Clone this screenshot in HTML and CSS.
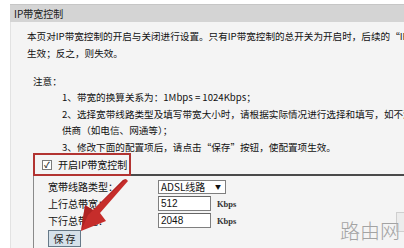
FILE: index.html
```html
<!DOCTYPE html>
<html lang="zh-CN">
<head>
    <meta charset="UTF-8">
    <title>IP带宽控制</title>
    <link rel="stylesheet" href="styles.css">
</head>
<body>
    <div class="page">
        <div class="title-bar">IP带宽控制</div>
        <div class="panel">
            <div class="intro">
                <div class="line">本页对IP带宽控制的开启与关闭进行设置。只有IP带宽控制的总开关为开启时，后续的“IP带宽控制规则”才能生效；</div>
                <div class="line">生效；反之，则失效。</div>
            </div>

            <div class="note">
                <div class="note-title">注意：</div>
                <div class="note-list">
                    <div class="line">1、带宽的换算关系为：1Mbps = 1024Kbps；</div>
                    <div class="line">2、选择宽带线路类型及填写带宽大小时，请根据实际情况进行选择和填写，如不清楚，请咨询您的带宽提</div>
                    <div class="line">供商（如电信、网通等）；</div>
                    <div class="line">3、修改下面的配置项后，请点击“保存”按钮，使配置项生效。</div>
                </div>
            </div>

            <div class="section">
                <div class="section-head">
                    <label class="switch-box">
                        <span class="check">✓</span>
                        <span>开启IP带宽控制</span>
                    </label>
                </div>
                <div class="section-body">
                    <div class="form-row">
                        <span class="form-label">宽带线路类型：</span>
                        <span class="select">ADSL线路<span class="select-arrow">▼</span></span>
                    </div>
                    <div class="form-row">
                        <span class="form-label">上行总带宽：</span>
                        <span class="input">512</span>
                        <span class="unit">Kbps</span>
                    </div>
                    <div class="form-row">
                        <span class="form-label">下行总带宽：</span>
                        <span class="input">2048</span>
                        <span class="unit">Kbps</span>
                    </div>
                    <button class="save-btn">保 存</button>
                </div>
            </div>
        </div>
    </div>

    <svg class="arrow" width="404" height="248" viewBox="0 0 404 248">
        <path d="M126 179 L128 181 L100 213 L106 221 L81 231 L85 205 L93 210 L123 180 Z" fill="#c62d2b"/>
        <path d="M126 179 L123 180 L93 210 L85 205 L81 231 L88 215 Z" fill="#9e1d1c" opacity="0.6"/>
    </svg>

    <div class="corner-box"></div>
    <div class="watermark">路由网</div>
</body>
</html>
```

FILE: styles.css
```css
* {
    margin: 0;
    padding: 0;
    box-sizing: border-box;
}

body {
    width: 404px;
    height: 248px;
    overflow: hidden;
    background: #ffffff;
    font-family: 'Noto Sans CJK SC', 'Liberation Sans', sans-serif;
    font-size: 9.6px;
    color: #111;
    position: relative;
}

.page {
    padding: 4px 0 0 10px;
    height: 100%;
    display: flex;
    flex-direction: column;
}

.title-bar {
    height: 18px;
    line-height: 18px;
    padding-left: 4px;
    background: #d4d4d4;
    border-top: 1px solid #c6c6c6;
    font-size: 10px;
    color: #222;
}

.panel {
    flex: 1;
    min-height: 0;
    overflow: hidden;
    background: #f4f4f4;
    border-left: 1px solid #e2e2e2;
    padding: 6px 0 0 16px;
}

.line {
    white-space: nowrap;
    line-height: 16.5px;
}

.note {
    margin-top: 12px;
    padding-left: 6px;
}

.note-title {
    line-height: 16px;
}

.note-list {
    padding-left: 29px;
}

.section {
    margin: -2px 0 0 6px;
}

.section-head {
    border-bottom: 2px solid #4a4a4a;
    height: 23px;
}

/* red annotation frame, runs 2px past the head line */
.switch-box {
    display: flex;
    align-items: center;
    gap: 6px;
    width: 98px;
    height: 23px;
    padding-left: 7px;
    border: 2px solid #b23331;
    font-size: 10px;
    position: relative;
}

.check {
    width: 10px;
    height: 10px;
    border: 1px solid #7a7a7a;
    background: #ffffff;
    font-size: 8px;
    line-height: 8px;
    text-align: center;
    font-weight: bold;
    color: #333;
}

.section-body {
    border-left: 1px solid #8a8a8a;
    height: 77px;
    padding: 3px 0 0 14px;
    display: flex;
    flex-direction: column;
    gap: 2px;
}

.form-row {
    display: flex;
    align-items: center;
    height: 15px;
}

.form-label {
    width: 110px;
    font-size: 10px;
}

.select {
    width: 68px;
    height: 14px;
    border: 1px solid #7f7f7f;
    background: #ffffff;
    display: flex;
    align-items: center;
    justify-content: space-between;
    padding: 0 4px 0 2px;
    font-size: 10px;
}

.select-arrow {
    font-size: 6px;
}

.input {
    width: 53px;
    height: 15px;
    line-height: 13px;
    border: 1px solid #7f7f7f;
    border-top-color: #666;
    background: #ffffff;
    padding-left: 2px;
    font-family: 'Liberation Sans', sans-serif;
    font-size: 10px;
}

.unit {
    margin-left: 6px;
    font-family: 'Liberation Serif', serif;
    font-size: 8.5px;
    font-weight: bold;
    color: #333;
}

.save-btn {
    width: 33px;
    height: 17px;
    background: #d5e1ea;
    border: 1px solid #667988;
    font-family: 'Noto Sans CJK SC', sans-serif;
    font-size: 10px;
    color: #222;
}

.arrow {
    position: absolute;
    left: 0;
    top: 0;
}

.corner-box {
    position: absolute;
    left: 396px;
    top: 212px;
    width: 12px;
    height: 20px;
    border: 1px solid #cfcfcf;
    background: #ececec;
}

.watermark {
    position: absolute;
    left: 340px;
    top: 216px;
    font-size: 20px;
    font-weight: 300;
    color: #a3a3a3;
}
```
